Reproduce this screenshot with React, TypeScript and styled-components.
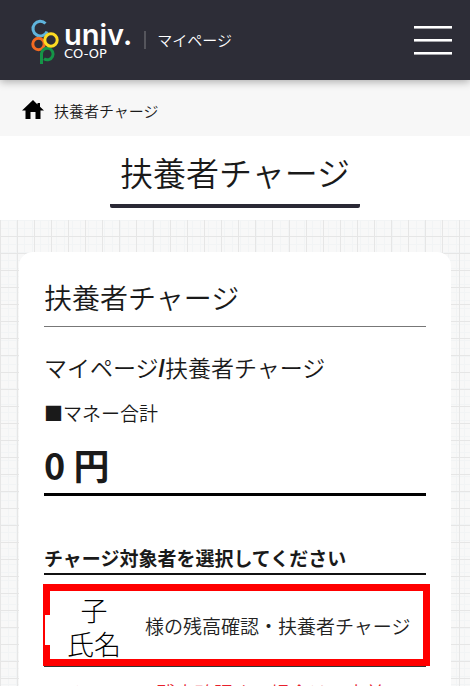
import React from "react";
import styled, { createGlobalStyle } from "styled-components";

const Global = createGlobalStyle`
  * { box-sizing: border-box; }
  html, body { margin: 0; height: 100%; }
  body {
    overflow: hidden;
    background: #fff;
    color: #1a1a1a;
    font-family: "Noto Sans CJK JP", "Noto Sans", sans-serif;
    font-size: 19px;
  }
  h1, h2, h3, p { margin: 0; font-weight: 350; }
`;

const Header = styled.header`
  position: relative;
  display: flex;
  align-items: center;
  height: 80px;
  padding: 0 18px 0 30px;
  background: #2d2d37;
  color: #fff;
  box-shadow: 0 2px 8px rgba(0, 0, 0, 0.3);
`;

const Brand = styled.a`
  display: flex;
  align-items: center;
  gap: 4px;
  color: inherit;
  text-decoration: none;
`;

const Wordmark = styled.span`
  display: flex;
  flex-direction: column;
  padding-top: 4px;
`;

const BrandName = styled.span`
  font: 600 29px/24px Inter, sans-serif;
`;

const BrandSub = styled.span`
  font: 400 13px/14px "DejaVu Sans", sans-serif;
`;

const SiteName = styled.span`
  margin-left: 12px;
  padding-left: 11px;
  border-left: 2px solid #55555c;
  font-size: 15px;
  line-height: 18px;
  font-weight: 350;
`;

const MenuButton = styled.button`
  display: flex;
  flex-direction: column;
  gap: 10px;
  margin-left: auto;
  padding: 0;
  border: 0;
  background: none;
`;

const MenuBar = styled.span`
  width: 38px;
  height: 3px;
  border-bottom: 1px solid #a5a5aa;
  background: #fff;
`;

const Breadcrumb = styled.nav`
  display: flex;
  align-items: center;
  gap: 10px;
  height: 56px;
  padding: 4px 22px 0;
  background: #f7f7f7;
  font-size: 15px;
  font-weight: 350;
`;

const HomeLink = styled.a`
  display: flex;
  color: #000;
`;

const TitleBand = styled.div`
  display: flex;
  justify-content: center;
  height: 84px;
  padding-top: 12px;
`;

const PageTitle = styled.h1`
  height: 60px;
  padding: 0 10px;
  border-bottom: 4px solid #2a2935;
  border-radius: 2px;
  font-size: 33px;
  line-height: 48px;
`;

const GridArea = styled.main`
  padding: 32px 19px;
  background-color: #f8f8f8;
  background-image:
    linear-gradient(90deg, #e6e6e6 1px, transparent 1px),
    linear-gradient(#e6e6e6 1px, transparent 1px),
    linear-gradient(90deg, #f2f4f5 1px, transparent 1px),
    linear-gradient(#f2f4f5 1px, transparent 1px);
  background-size: 17px 17px, 17px 17px, 8px 17px, 17px 8px;
  background-position: 0 16px;
`;

const Card = styled.section`
  padding: 24px 25px;
  border-radius: 14px;
  background: #fff;
`;

const CardTitle = styled.h2`
  padding-bottom: 8px;
  border-bottom: 1px solid #777;
  font-size: 28px;
  line-height: 42px;
`;

const SubTitle = styled.h3`
  margin-top: 22px;
  font-size: 23px;
  line-height: 36px;
`;

const Slash = styled.span`
  font-family: "Liberation Sans", sans-serif;
  font-weight: 700;
  line-height: 1;
`;

const BalanceLabel = styled.p`
  margin-top: 14px;
  line-height: 28px;
`;

const Balance = styled.p`
  margin-top: 12px;
  padding-bottom: 4px;
  border-bottom: 3px solid #000;
  font-size: 36px;
  font-weight: 700;
  line-height: 50px;
`;

const SelectLabel = styled.p`
  margin-top: 48px;
  padding-bottom: 1px;
  border-bottom: 2px solid #111;
  font-weight: 700;
  line-height: 28px;
`;

const TargetRow = styled.div`
  margin-top: 9px;
  border-bottom: 1px solid #333;
`;

const Target = styled.button`
  position: relative;
  display: flex;
  align-items: center;
  width: calc(100% + 5px);
  height: 82px;
  margin-left: -1px;
  padding: 0 10px 0 17px;
  border: 7px solid #f00;
  background: #fff;
  color: #222;
  font: inherit;
  font-weight: 350;
  text-align: left;
  white-space: nowrap;

  &::before {
    content: "";
    position: absolute;
    top: 24px;
    left: -5px;
    width: 5px;
    height: 30px;
    background: #fff;
  }
`;

const ChildName = styled.span`
  display: flex;
  flex-direction: column;
  align-items: center;
  width: 54px;
  margin-right: 24px;
  padding-top: 4px;
  color: #000;
  font-size: 27px;
  font-weight: 300;
  line-height: 34px;
`;

const Notice = styled.p`
  margin-top: 12px;
  color: #e8202c;
  line-height: 28px;
`;

const Logo = () => (
  <svg width="30" height="48" viewBox="0 0 30 48" fill="none" strokeWidth="3" aria-hidden="true">
    <path d="M15.5 7.5A7.3 7.3 0 1 0 17 15.5" stroke="#5fb4dc" />
    <circle cx="8.5" cy="28" r="5.7" stroke="#f26a21" />
    <path d="M11.5 48V37.5A5.8 5.8 0 1 1 14 42.8" stroke="#159447" />
    <circle cx="21" cy="24" r="6.2" stroke="#fddb22" />
  </svg>
);

const HomeIcon = () => (
  <svg width="22" height="20" viewBox="0 0 22 20" fill="currentColor" aria-hidden="true">
    <path d="M11 0 0 10.5H3.5V19H8.5V12H13.5V19H18.5V10.5H22L18 6.8V3H15.5V4.4Z" />
  </svg>
);

export default function App() {
  return (
    <>
      <Global />
      <Header>
        <Brand href="#">
          <Logo />
          <Wordmark>
            <BrandName>univ.</BrandName>
            <BrandSub>CO-OP</BrandSub>
          </Wordmark>
        </Brand>
        <SiteName>マイページ</SiteName>
        <MenuButton aria-label="メニュー">
          <MenuBar />
          <MenuBar />
          <MenuBar />
        </MenuButton>
      </Header>
      <Breadcrumb>
        <HomeLink href="#" aria-label="ホーム">
          <HomeIcon />
        </HomeLink>
        <span>扶養者チャージ</span>
      </Breadcrumb>
      <TitleBand>
        <PageTitle>扶養者チャージ</PageTitle>
      </TitleBand>
      <GridArea>
        <Card>
          <CardTitle>扶養者チャージ</CardTitle>
          <SubTitle>
            マイページ<Slash>/</Slash>扶養者チャージ
          </SubTitle>
          <BalanceLabel>■マネー合計</BalanceLabel>
          <Balance>0 円</Balance>
          <SelectLabel>チャージ対象者を選択してください</SelectLabel>
          <TargetRow>
            <Target>
              <ChildName>
                <span>子</span>
                <span>氏名</span>
              </ChildName>
              <span>様の残高確認・扶養者チャージ</span>
            </Target>
          </TargetRow>
          <Notice>※チャージ、残高確認する場合は、事前</Notice>
        </Card>
      </GridArea>
    </>
  );
}
